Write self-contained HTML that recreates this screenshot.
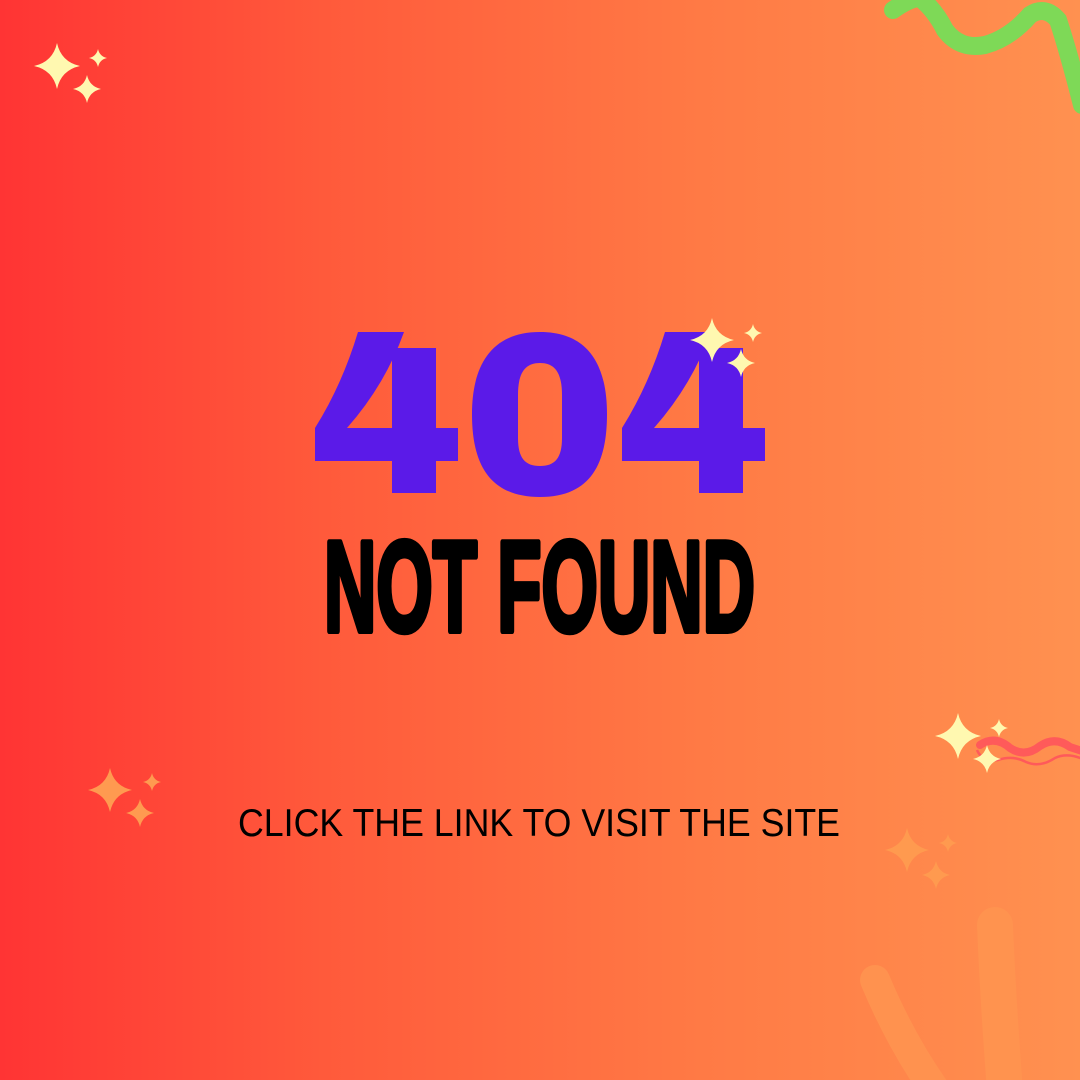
<!DOCTYPE html>
<html><head><meta charset="utf-8"><style>
html,body{margin:0;padding:0;width:1080px;height:1080px;overflow:hidden}
body{background:linear-gradient(90deg,#ff3434 0%,#ff5a3b 30%,#ff7a45 65%,#ff9150 100%)}
svg{position:absolute;left:0;top:0}
</style></head><body>
<svg width="1080" height="1080" viewBox="0 0 1080 1080" xmlns="http://www.w3.org/2000/svg">
<defs>
<path id="st" d="M0,-1 Q0.18,-0.18 1,0 Q0.18,0.18 0,1 Q-0.18,0.18 -1,0 Q-0.18,-0.18 0,-1Z"/>
</defs>
<g stroke="#ff9450" stroke-linecap="round" fill="none" opacity="0.9">
<path d="M875,980 Q900,1040 935,1090" stroke-width="30"/>
<path d="M995,925 Q998,1000 1005,1090" stroke-width="36"/>
</g>
<path d="M893,10 Q910,-2 920,-2 Q935,10 945,30 Q960,50 985,45 Q1010,38 1030,15 Q1045,5 1058,20 Q1068,50 1082,105" fill="none" stroke="#7ed957" stroke-width="18" stroke-linecap="round"/>
<path d="M980,745 Q995,735 1010,748 Q1025,758 1040,746 Q1055,736 1070,747 L1085,752" fill="none" stroke="#ff5a5a" stroke-width="8" stroke-linecap="round"/>
<path d="M977,750 Q982,762 998,760 Q1013,755 1026,762 Q1040,768 1055,758 Q1068,752 1085,760" fill="none" stroke="#ff5a5a" stroke-width="2.5"/>
<g fill="#5b1ae8">
<path d="M358,332 L404,332 Q385,385 347,428 L458,428 L458,461 L315,461 L315,428 Q342,385 358,332Z"/>
<rect x="392" y="348" width="44" height="145"/>
<path transform="translate(307,0)" d="M358,332 L404,332 Q385,385 347,428 L458,428 L458,461 L315,461 L315,428 Q342,385 358,332Z"/>
<rect x="699" y="348" width="44" height="145"/>
<path fill-rule="evenodd" d="M540,332 C592,332 607,370 607,414 C607,462 592,497 540,497 C488,497 472,462 472,414 C472,370 488,332 540,332Z M540,363 C525,363 518,373 518,395 L518,438 C518,458 525,466 540,466 C555,466 562,458 562,438 L562,395 C562,373 555,363 540,363Z"/>
</g>
<g fill="#fff8b0">
<use href="#st" transform="translate(57,66) scale(23)"/>
<use href="#st" transform="translate(98,58) scale(9)"/>
<use href="#st" transform="translate(87,89) scale(14)"/>
<use href="#st" transform="translate(712,340) scale(22)"/>
<use href="#st" transform="translate(753,333) scale(9)"/>
<use href="#st" transform="translate(741,363) scale(14)"/>
<use href="#st" transform="translate(958,736) scale(23)"/>
<use href="#st" transform="translate(999,728) scale(9)"/>
<use href="#st" transform="translate(987,759) scale(14)"/>
</g>
<g fill="#ff9a50">
<use href="#st" transform="translate(110,790) scale(22)"/>
<use href="#st" transform="translate(152,782) scale(9)"/>
<use href="#st" transform="translate(140,813) scale(14)"/>
</g>
<g fill="#ff9a4f">
<use href="#st" transform="translate(907,850) scale(22)"/>
<use href="#st" transform="translate(948,843) scale(9)"/>
<use href="#st" transform="translate(936,875) scale(14)"/>
</g>
<text x="324" y="631" font-family="Liberation Sans, sans-serif" font-weight="bold" font-size="129" textLength="431" lengthAdjust="spacingAndGlyphs" fill="#000" stroke="#000" stroke-width="6" stroke-linejoin="round">NOT FOUND</text>
<text x="238" y="836" font-family="Liberation Sans, sans-serif" font-size="39" textLength="602" lengthAdjust="spacingAndGlyphs" fill="#000">CLICK THE LINK TO VISIT THE SITE</text>
</svg>
</body></html>
